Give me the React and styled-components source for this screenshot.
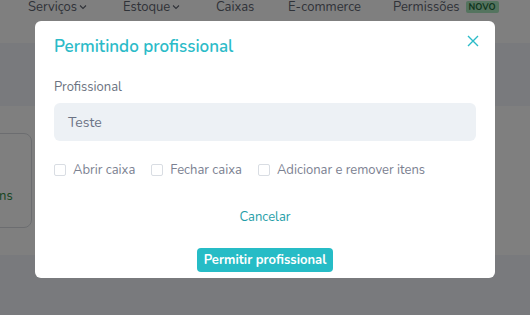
import React from "react";
import styled, { createGlobalStyle } from "styled-components";

const GlobalStyle = createGlobalStyle`
  html, body {
    margin: 0;
    padding: 0;
    width: 530px;
    height: 315px;
    overflow: hidden;
    font-family: "Nunito", "Open Sans", "Noto Sans", sans-serif;
  }
`;

const Page = styled.div`
  display: flex;
  flex-direction: column;
  width: 530px;
  height: 315px;
  background: #f3f5fa;
`;

const NavBar = styled.div`
  height: 43px;
  background: #ffffff;
  display: flex;
  align-items: flex-start;
  padding-left: 28px;
`;

const NavItem = styled.div`
  display: flex;
  align-items: center;
  gap: 2px;
  width: ${(p) => p.w}px;
  font-size: 13px;
  line-height: 14px;
  color: #5e6470;
`;

const Badge = styled.span`
  margin-left: 4px;
  padding: 0 3px;
  font-size: 9px;
  line-height: 12px;
  font-weight: 700;
  color: #1f6a3a;
  background: #a9e8bf;
  border-radius: 2px;
`;

const Band = styled.div`
  height: 63px;
  background: #f3f5fa;
`;

const Content = styled.div`
  height: 149px;
  background: #ffffff;
  padding-top: 27px;
  box-sizing: border-box;
`;

const Card = styled.div`
  width: 60px;
  height: 95px;
  margin-left: -28px;
  border: 1px solid #d8dbe0;
  border-radius: 8px;
  box-sizing: border-box;
  display: flex;
  align-items: flex-end;
  padding: 0 0 22px 26px;
  font-size: 13px;
  color: #2d8a3e;
`;

const Overlay = styled.div`
  position: fixed;
  inset: 0;
  background: rgba(0, 0, 0, 0.5);
  display: flex;
  justify-content: center;
  align-items: flex-start;
  padding-top: 21px;
`;

const Modal = styled.div`
  width: 460px;
  height: 257px;
  background: #ffffff;
  border-radius: 6px;
  box-sizing: border-box;
  padding: 15px 19px 0;
  display: flex;
  flex-direction: column;
`;

const Header = styled.div`
  display: flex;
  justify-content: space-between;
  align-items: flex-start;
`;

const Title = styled.h2`
  margin: 0;
  font-size: 17px;
  line-height: 22px;
  font-weight: 600;
  color: #2bbbc8;
`;

const Close = styled.button`
  border: none;
  background: none;
  padding: 0;
  margin: -2px -4px 0 0;
  width: 14px;
  height: 14px;
  cursor: pointer;
  display: flex;
`;

const Label = styled.div`
  margin-top: 21px;
  font-size: 13px;
  line-height: 16px;
  color: #6b7280;
`;

const Input = styled.div`
  margin-top: 8px;
  height: 38px;
  border-radius: 6px;
  background: #edf1f5;
  display: flex;
  align-items: center;
  padding-left: 14px;
  font-size: 14px;
  color: #6b7385;
`;

const Checks = styled.div`
  display: flex;
  align-items: center;
  margin-top: 21px;
  gap: 16px;
`;

const Check = styled.label`
  display: flex;
  align-items: center;
  gap: 7px;
  font-size: 13px;
  line-height: 16px;
  color: #7b8191;
`;

const Box = styled.span`
  width: 12px;
  height: 12px;
  border: 1px solid #d9dde3;
  border-radius: 2px;
  box-sizing: border-box;
  background: #fff;
`;

const Cancel = styled.div`
  margin-top: 31px;
  text-align: center;
  font-size: 13px;
  line-height: 16px;
  color: #1f9ea8;
`;

const Primary = styled.button`
  align-self: center;
  margin-top: 23px;
  height: 24px;
  padding: 0 7px;
  border: none;
  border-radius: 4px;
  background: #26bcc6;
  color: #ffffff;
  font-family: inherit;
  font-size: 13px;
  font-weight: 700;
`;

const Chevron = () => (
  <svg width="8" height="6" viewBox="0 0 8 6">
    <path d="M1 1.5 4 4.5 7 1.5" fill="none" stroke="#5e6470" strokeWidth="1.1" />
  </svg>
);

const App = () => {
  const permissions = ["Abrir caixa", "Fechar caixa", "Adicionar e remover itens"];

  return (
    <>
      <GlobalStyle />
      <Page>
        <NavBar>
          <NavItem w={95}>
            Serviços <Chevron />
          </NavItem>
          <NavItem w={93}>
            Estoque <Chevron />
          </NavItem>
          <NavItem w={72}>Caixas</NavItem>
          <NavItem w={105}>E-commerce</NavItem>
          <NavItem w={110}>
            Permissões <Badge>NOVO</Badge>
          </NavItem>
        </NavBar>
        <Band />
        <Content>
          <Card>ns</Card>
        </Content>
      </Page>
      <Overlay>
        <Modal>
          <Header>
            <Title>Permitindo profissional</Title>
            <Close aria-label="Fechar">
              <svg width="14" height="14" viewBox="0 0 14 14">
                <path d="M2 2 12 12M12 2 2 12" stroke="#2bbbc8" strokeWidth="1.4" />
              </svg>
            </Close>
          </Header>
          <Label>Profissional</Label>
          <Input>Teste</Input>
          <Checks>
            {permissions.map((item) => (
              <Check key={item}>
                <Box />
                {item}
              </Check>
            ))}
          </Checks>
          <Cancel>Cancelar</Cancel>
          <Primary>Permitir profissional</Primary>
        </Modal>
      </Overlay>
    </>
  );
};

export default App;
